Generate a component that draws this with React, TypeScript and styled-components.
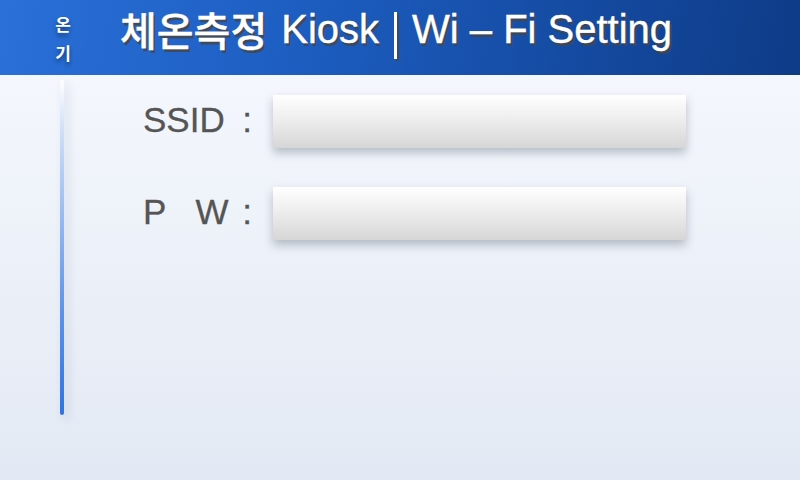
import React from "react";
import styled, { createGlobalStyle } from "styled-components";

const Global = createGlobalStyle`
  html, body { margin: 0; padding: 0; width: 800px; height: 480px; overflow: hidden; }
  body { font-family: "Liberation Sans", "Noto Sans CJK KR", Arial, sans-serif; }
`;

const Screen = styled.div`
  width: 800px;
  height: 480px;
  display: flex;
  flex-direction: column;
  background: linear-gradient(180deg, #f7faff 0%, #eef2f9 45%, #e3e9f4 100%);
`;

const Header = styled.header`
  height: 75px;
  flex: none;
  display: flex;
  align-items: center;
  padding-left: 53px;
  background: linear-gradient(100deg, #2a70d9 0%, #1c5cbf 40%, #0e3b87 100%);
`;

const SideTag = styled.div`
  width: 20px;
  display: flex;
  flex-direction: column;
  align-items: center;
  gap: 9px;
  margin-top: 1px;
  color: #fff;
  font-family: "Noto Sans CJK KR", sans-serif;
  font-weight: 700;
  font-size: 17px;
  line-height: 20px;
  text-shadow: 0 3px 4px rgba(0, 0, 0, 0.45);
`;

const Title = styled.h1`
  margin: -18px 0 0 47px;
  display: flex;
  align-items: center;
  color: #fff;
  font-size: 40px;
  font-weight: 400;
  line-height: 48px;
  white-space: nowrap;
  text-shadow: 2px 3px 0 rgba(70, 70, 70, 0.85);
  -webkit-text-stroke: 0.4px #fff;
`;

const Hangul = styled.span`
  font-family: "Noto Sans CJK KR", sans-serif;
  font-weight: 500;
  font-size: 40px;
  margin-right: 14px;
`;

const Divider = styled.span`
  width: 3px;
  height: 47px;
  margin: 14px 15px 0 15px;
  background: #fff;
  box-shadow: 2px 2px 0 rgba(70, 70, 70, 0.85);
`;

const Body = styled.main`
  flex: 1;
  display: flex;
  padding-left: 60px;
`;

const Rail = styled.div`
  width: 4px;
  height: 335px;
  margin-top: 5px;
  border-radius: 2px;
  background: linear-gradient(180deg, rgba(255, 255, 255, 0.9) 0%, #cfdff7 15%, #8fb4ee 45%, #5a92e8 70%, #2f74e0 100%);
  box-shadow: 4px 4px 10px rgba(60, 80, 120, 0.18);
`;

const Form = styled.div`
  margin-left: 79px;
  padding-top: 20px;
  display: flex;
  flex-direction: column;
  gap: 39px;
`;

const Row = styled.div`
  display: flex;
  align-items: center;
`;

const Label = styled.div`
  width: 130px;
  display: flex;
  justify-content: space-between;
  align-items: center;
  padding-right: 21px;
  box-sizing: border-box;
  color: #555;
  font-size: 35px;
  margin-top: -4px;
  -webkit-text-stroke: 0.3px #555;
`;

const Name = styled.span<{ $ws?: number }>`
  word-spacing: ${(p) => p.$ws ?? 0}px;
  white-space: pre;
`;

const Colon = styled.span``;

const Field = styled.div`
  width: 413px;
  height: 53px;
  background: linear-gradient(180deg, #ffffff 0%, #eeeeee 45%, #d6d6d6 100%);
  box-shadow: 0 5px 9px rgba(60, 70, 90, 0.32);
`;

export default function App() {
  return (
    <>
      <Global />
      <Screen>
        <Header>
          <SideTag>
            <span>온</span>
            <span>기</span>
          </SideTag>
          <Title>
            <Hangul>체온측정</Hangul>
            Kiosk
            <Divider />
            Wi – Fi Setting
          </Title>
        </Header>
        <Body>
          <Rail />
          <Form>
            <Row>
              <Label>
                <Name>SSID</Name>
                <Colon>:</Colon>
              </Label>
              <Field />
            </Row>
            <Row>
              <Label>
                <Name $ws={20}>P W</Name>
                <Colon>:</Colon>
              </Label>
              <Field />
            </Row>
          </Form>
        </Body>
      </Screen>
    </>
  );
}
